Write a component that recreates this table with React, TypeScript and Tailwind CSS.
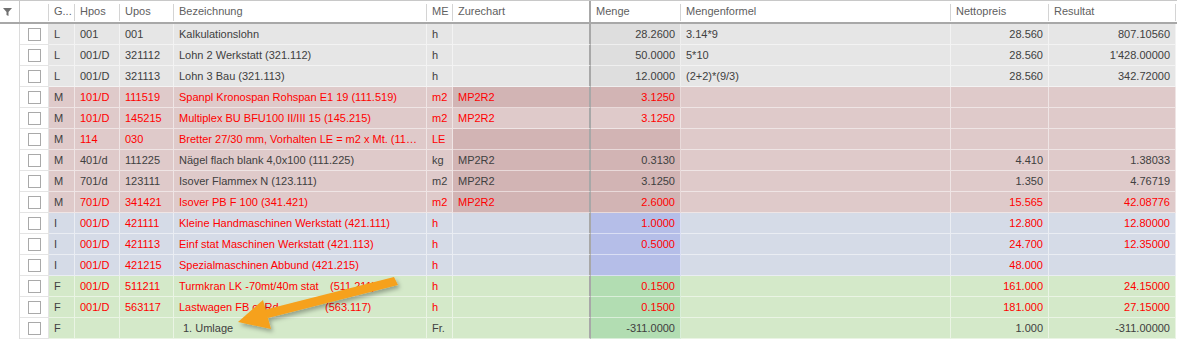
import React from 'react';

type Kind = 'L' | 'M' | 'I' | 'F';

interface Row {
  g: Kind;
  hpos: string;
  upos: string;
  bez: React.ReactNode;
  me: string;
  zur: string;
  menge: string;
  formel: string;
  netto: string;
  res: string;
  red?: boolean;
  dark?: boolean; // darker Zurechart / Menge cells
  indent?: boolean;
}

const rows: Row[] = [
  { g: 'L', hpos: '001', upos: '001', bez: 'Kalkulationslohn', me: 'h', zur: '', menge: '28.2600', formel: '3.14*9', netto: '28.560', res: '807.10560' },
  { g: 'L', hpos: '001/D', upos: '321112', bez: 'Lohn 2 Werkstatt (321.112)', me: 'h', zur: '', menge: '50.0000', formel: '5*10', netto: '28.560', res: "1'428.00000" },
  { g: 'L', hpos: '001/D', upos: '321113', bez: 'Lohn 3 Bau (321.113)', me: 'h', zur: '', menge: '12.0000', formel: '(2+2)*(9/3)', netto: '28.560', res: '342.72000' },
  { g: 'M', hpos: '101/D', upos: '111519', bez: 'Spanpl Kronospan Rohspan E1 19 (111.519)', me: 'm2', zur: 'MP2R2', menge: '3.1250', formel: '', netto: '', res: '', red: true, dark: true },
  { g: 'M', hpos: '101/D', upos: '145215', bez: 'Multiplex BU BFU100 II/III 15 (145.215)', me: 'm2', zur: 'MP2R2', menge: '3.1250', formel: '', netto: '', res: '', red: true },
  { g: 'M', hpos: '114', upos: '030', bez: 'Bretter 27/30 mm, Vorhalten LE = m2 x Mt. (114.030)', me: 'LE', zur: '', menge: '', formel: '', netto: '', res: '', red: true, dark: true },
  { g: 'M', hpos: '401/d', upos: '111225', bez: 'Nägel flach blank 4,0x100 (111.225)', me: 'kg', zur: 'MP2R2', menge: '0.3130', formel: '', netto: '4.410', res: '1.38033', dark: true },
  { g: 'M', hpos: '701/d', upos: '123111', bez: 'Isover Flammex N (123.111)', me: 'm2', zur: 'MP2R2', menge: '3.1250', formel: '', netto: '1.350', res: '4.76719', dark: true },
  { g: 'M', hpos: '701/D', upos: '341421', bez: 'Isover PB F 100 (341.421)', me: 'm2', zur: 'MP2R2', menge: '2.6000', formel: '', netto: '15.565', res: '42.08776', red: true, dark: true },
  { g: 'I', hpos: '001/D', upos: '421111', bez: 'Kleine Handmaschinen Werkstatt (421.111)', me: 'h', zur: '', menge: '1.0000', formel: '', netto: '12.800', res: '12.80000', red: true },
  { g: 'I', hpos: '001/D', upos: '421113', bez: 'Einf stat Maschinen Werkstatt (421.113)', me: 'h', zur: '', menge: '0.5000', formel: '', netto: '24.700', res: '12.35000', red: true },
  { g: 'I', hpos: '001/D', upos: '421215', bez: 'Spezialmaschinen Abbund (421.215)', me: 'h', zur: '', menge: '', formel: '', netto: '48.000', res: '', red: true },
  {
    g: 'F', hpos: '001/D', upos: '511211',
    bez: (<><span className="inline-block w-[151px]">Turmkran LK -70mt/40m stat</span>(511.211)</>),
    me: 'h', zur: '', menge: '0.1500', formel: '', netto: '161.000', res: '24.15000', red: true,
  },
  {
    g: 'F', hpos: '001/D', upos: '563117',
    bez: (<><span className="inline-block w-[146px]">Lastwagen FB o. Rd.</span>(563.117)</>),
    me: 'h', zur: '', menge: '0.1500', formel: '', netto: '181.000', res: '27.15000', red: true,
  },
  { g: 'F', hpos: '', upos: '', bez: '1. Umlage', me: 'Fr.', zur: '', menge: '-311.0000', formel: '', netto: '1.000', res: '-311.00000', indent: true },
];

const rowBg: Record<Kind, string> = {
  L: 'bg-[#e6e6e6]',
  M: 'bg-[#dfcaca]',
  I: 'bg-[#d5dbe7]',
  F: 'bg-[#d4e9c9]',
};

const zurBg: Record<Kind, string> = {
  L: 'bg-[#e6e6e6]',
  M: 'bg-[#d2b4b4]',
  I: 'bg-[#d5dbe7]',
  F: 'bg-[#d4e9c9]',
};

const mengeBg: Record<Kind, string> = {
  L: 'bg-[#dedede]',
  M: 'bg-[#d2b4b4]',
  I: 'bg-[#b5bee8]',
  F: 'bg-[#b2ddb2]',
};

const cols = 'grid grid-cols-[20px_29px_26px_45px_54px_253px_26px_138px_90px_270px_98px_127px]';

function Cell({ className = '', children }: { className?: string; children?: React.ReactNode }) {
  return (
    <div className={`h-[21px] overflow-hidden text-ellipsis whitespace-nowrap border-b border-r border-white/50 px-[5px] leading-[20px] ${className}`}>
      {children}
    </div>
  );
}

function HeadCell({ label, className = '' }: { label?: string; className?: string }) {
  return (
    <div className={`relative flex h-[21px] items-center px-[5px] ${className}`}>
      {label}
      <span className="absolute right-0 top-[3px] h-[17px] w-px bg-[#d4d4d4]" />
    </div>
  );
}

export default function App() {
  return (
    <div className="relative h-[339px] w-[1177px] overflow-hidden bg-white text-[11px] text-[#404040] [font-family:'Liberation_Sans',Arial,sans-serif]">
      {/* Kopfzeile */}
      <div className={`${cols} border-b-2 border-t border-b-[#a8a8a8] border-t-[#c8c8c8] bg-white text-[#606060]`}>
        <div className="flex h-[21px] items-center border-r border-[#c8c8c8] pl-[3px]">
          <svg width="9" height="8" viewBox="0 0 9 8">
            <path d="M0 0H9L5.5 4V8L3.5 7V4Z" fill="#707070" />
          </svg>
        </div>
        <HeadCell />
        <HeadCell label="G..." />
        <HeadCell label="Hpos" />
        <HeadCell label="Upos" />
        <HeadCell label="Bezeichnung" />
        <HeadCell label="ME" />
        <div className="flex h-[21px] items-center border-r-2 border-[#a8a8a8] px-[5px]">Zurechart</div>
        <HeadCell label="Menge" />
        <HeadCell label="Mengenformel" />
        <HeadCell label="Nettopreis" />
        <HeadCell label="Resultat" />
      </div>

      {/* Zeilen */}
      {rows.map((r, i) => {
        const bg = rowBg[r.g];
        const txt = r.red ? 'text-[#ff0000]' : 'text-[#404040]';
        return (
          <div key={i} className={cols}>
            <div className="h-[21px] border-r border-[#dcdcdc] bg-white" />
            <div className="flex h-[21px] items-center border-b border-r border-[#e4e4e4] bg-white pl-[8px]">
              <span className="block h-[13px] w-[13px] border border-[#a9a9a9] bg-white" />
            </div>
            <Cell className={`${bg} text-[#404040]`}>{r.g}</Cell>
            <Cell className={`${bg} ${txt}`}>{r.hpos}</Cell>
            <Cell className={`${bg} ${txt}`}>{r.upos}</Cell>
            <Cell className={`${bg} ${txt} ${r.indent ? 'pl-[9px]' : ''}`}>{r.bez}</Cell>
            <Cell className={`${bg} ${txt} !text-clip`}>{r.me}</Cell>
            <div className={`h-[21px] overflow-hidden whitespace-nowrap border-b border-white/50 px-[5px] leading-[20px] ${r.dark ? zurBg[r.g] : bg} ${txt} border-r-2 border-r-[#a8a8a8]`}>
              {r.zur}
            </div>
            <Cell className={`${r.dark || r.g !== 'M' ? mengeBg[r.g] : bg} ${txt} text-right`}>{r.menge}</Cell>
            <Cell className={`${bg} ${txt}`}>{r.formel}</Cell>
            <Cell className={`${bg} ${txt} text-right`}>{r.netto}</Cell>
            <Cell className={`${bg} ${txt} text-right`}>{r.res}</Cell>
          </div>
        );
      })}

      {/* Hinweispfeil */}
      <svg className="pointer-events-none absolute left-0 top-0" width="1177" height="339">
        <defs>
          <filter id="shadow" x="-20%" y="-50%" width="140%" height="200%">
            <feDropShadow dx="2" dy="3" stdDeviation="2" floodColor="#000" floodOpacity="0.3" />
          </filter>
        </defs>
        <g filter="url(#shadow)" fill="#f6a11c">
          <polygon points="394,277 398,285 268,318 264,310" />
          <polygon points="263,300 238,322 271,329" />
        </g>
      </svg>
    </div>
  );
}
